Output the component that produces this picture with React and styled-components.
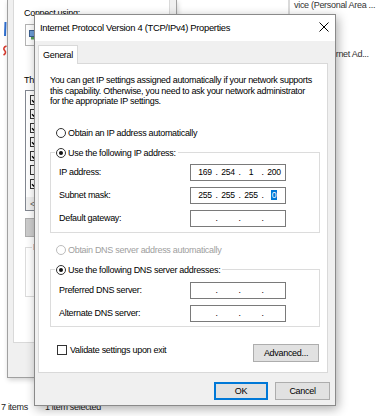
import React from "react";
import styled, { createGlobalStyle } from "styled-components";

const GlobalStyle = createGlobalStyle`
  html, body { margin: 0; padding: 0; background: #fff; overflow: hidden; }
  body { font-family: "Liberation Sans", Arial, sans-serif; }
  * { box-sizing: border-box; }
`;

const Desktop = styled.div`
  position: relative;
  width: 386px;
  height: 416px;
  overflow: hidden;
  background: #fff;
  font-family: "Liberation Sans", Arial, sans-serif;
  font-size: 9px;
  letter-spacing: -0.3px;
  color: #000;
`;

/* ---------- Explorer behind ---------- */
const Explorer = styled.div`
  position: absolute;
  inset: 0;
  display: grid;
  grid-template-rows: 1fr auto;
`;
const ExplorerMain = styled.div`
  display: flex;
`;
const NavPane = styled.div`
  width: 7px;
  flex: none;
  padding-top: 20px;
`;
const ContentPane = styled.div`
  flex: 1;
  display: flex;
  flex-direction: column;
  align-items: flex-start;
  color: #333;
`;
const Tile = styled.div`
  margin-left: ${(p) => p.$indent}px;
  margin-top: ${(p) => p.$top || 0}px;
  height: ${(p) => (p.$bar ? 14 : 10)}px;
  line-height: 10px;
  padding-left: ${(p) => (p.$bar ? 4 : 0)}px;
  border-left: ${(p) => (p.$bar ? "2px solid #dadada" : "none")};
  white-space: nowrap;
`;
const StatusBar = styled.div`
  display: flex;
  gap: 17px;
  height: 12px;
  line-height: 12px;
  margin-bottom: 3px;
  padding-left: 1px;
  color: #222;
`;

/* ---------- Ethernet properties window (behind) ---------- */
const EthWindow = styled.div`
  position: absolute;
  left: 7px;
  top: 0;
  width: 170px;
  height: 378px;
  background: #f0f0f0;
  border: 1px solid #a0a0a0;
  border-top: none;
  box-shadow: 1px 2px 5px rgba(0, 0, 0, 0.18);
  padding: 0 6px 34px 5px;
  display: flex;
  flex-direction: column;
`;
const EthPanel = styled.div`
  flex: 1;
  background: #fff;
  border: 1px solid #d9d9d9;
  border-top: none;
  padding: 8px 10px 0 10px;
  display: flex;
  flex-direction: column;
  align-items: flex-start;
`;
const EthLabel = styled.div`
  line-height: 11px;
  margin-top: ${(p) => p.$top || 0}px;
  white-space: nowrap;
`;
const AdapterBox = styled.div`
  margin: 5px 0 0 1px;
  width: 140px;
  height: 22px;
  border: 1px solid #b4b4b4;
  background: #fff;
  display: flex;
  align-items: center;
  padding-left: 3px;
`;
const ListBox = styled.div`
  margin: 4px 0 0 1px;
  width: 140px;
  height: 121px;
  border: 1px solid #828790;
  background: #fff;
  display: flex;
  flex-direction: column;
  padding: 4px 0 0 4px;
`;
const ListItem = styled.div`
  height: 14px;
  display: flex;
  align-items: flex-start;
  gap: 4px;
`;
const SmallCheck = styled.div`
  width: 10px;
  height: 10px;
  border: 1px solid #333;
  background: #fff;
  display: flex;
  align-items: center;
  justify-content: center;
`;
const HScroll = styled.div`
  margin: auto 0 0 -4px;
  height: 13px;
  background: #f0f0f0;
  display: flex;
  align-items: center;
  padding-left: 4px;
  color: #606060;
  font-size: 9px;
`;
const GrayButton = styled.div`
  margin: 7px 0 0 1px;
  width: 60px;
  height: 19px;
  background: #cccccc;
  border: 1px solid #adadad;
`;
const SmallGroup = styled.fieldset`
  margin: 4px 0 0 1px;
  padding: 0;
  width: 140px;
  height: 56px;
  border: 1px solid #dcdcdc;
  min-width: 0;
`;
const SmallLegend = styled.legend`
  margin-left: 6px;
  padding: 0 1px;
  line-height: 12px;
  color: #1a3d8f;
`;

/* ---------- TCP/IPv4 dialog ---------- */
const Dialog = styled.div`
  position: absolute;
  left: 34px;
  top: 14px;
  width: 302px;
  background: #f0f0f0;
  border: 1px solid #8a8a8a;
  box-shadow: 2px 3px 10px rgba(0, 0, 0, 0.32);
  display: flex;
  flex-direction: column;
`;
const TitleBar = styled.div`
  height: 26px;
  background: #fff;
  display: flex;
  align-items: center;
  justify-content: space-between;
  padding: 0 6px 2px 5px;
  font-size: 9.4px;
`;
const Body = styled.div`
  display: flex;
  flex-direction: column;
  padding: 4px 4px 5px 3px;
`;
const TabStrip = styled.div`
  display: flex;
`;
const Tab = styled.div`
  position: relative;
  z-index: 1;
  width: 40px;
  height: 19px;
  margin-bottom: -1px;
  background: #fff;
  border: 1px solid #d9d9d9;
  border-bottom: none;
  display: flex;
  align-items: center;
  justify-content: center;
  padding-bottom: 1px;
`;
const Panel = styled.div`
  width: 290px;
  background: #fff;
  border: 1px solid #d9d9d9;
  padding: 11px 7px 10px 11px;
  display: flex;
  flex-direction: column;
  align-items: flex-start;
`;
const Description = styled.p`
  margin: 0;
  line-height: 10.5px;
`;
const OptionRow = styled.div`
  display: inline-flex;
  align-items: center;
  gap: 2px;
  height: 12px;
  margin: ${(p) => p.$top || 0}px 0 0 ${(p) => (p.$legend ? 0 : 6)}px;
  color: ${(p) => (p.$disabled ? "#a0a0a0" : "#000")};
  white-space: nowrap;
`;
const Radio = styled.span`
  width: 10px;
  height: 10px;
  border-radius: 50%;
  border: 1px solid ${(p) => (p.$disabled ? "#bcbcbc" : "#333")};
  background: #fff;
  display: inline-flex;
  align-items: center;
  justify-content: center;
  flex: none;
  &::after {
    content: "";
    display: ${(p) => (p.$checked ? "block" : "none")};
    width: 4px;
    height: 4px;
    border-radius: 50%;
    background: #111;
  }
`;
const GroupBox = styled.fieldset`
  margin: 7px 0 0 0;
  padding: 0;
  width: 270px;
  min-width: 0;
  border: 1px solid #dcdcdc;
`;
const Legend = styled.legend`
  margin-left: 4px;
  padding: 0 2px 0 1px;
  line-height: 12px;
`;
const FieldGrid = styled.div`
  display: grid;
  grid-template-columns: 131px 96px;
  row-gap: 6px;
  align-items: center;
  padding: ${(p) => p.$pad};
`;
const FieldLabel = styled.span`
  white-space: nowrap;
`;
const IpBox = styled.div`
  width: 96px;
  height: 17px;
  border: 1px solid #7a7a7a;
  background: #fff;
  display: flex;
  align-items: center;
  padding-left: 4px;
  font-size: 8.6px;
`;
const Octet = styled.span`
  width: 20px;
  text-align: center;
  line-height: 10px;
`;
const Dot = styled.span`
  width: 3px;
  text-align: center;
  line-height: 10px;
`;
const Selected = styled.span`
  background: #0078d7;
  color: #fff;
  padding: 0 0.5px;
`;
const BottomRow = styled.div`
  align-self: stretch;
  margin-top: 17px;
  display: flex;
  justify-content: space-between;
  align-items: flex-start;
  padding: 0 1px 0 7px;
`;
const CheckRow = styled.label`
  display: flex;
  align-items: center;
  gap: 3px;
  height: 12px;
  white-space: nowrap;
`;
const CheckBox = styled.span`
  width: 10px;
  height: 10px;
  border: 1px solid #333;
  background: #fff;
  flex: none;
`;
const Button = styled.div`
  width: ${(p) => p.$w}px;
  height: 18px;
  background: #e1e1e1;
  border: ${(p) => (p.$default ? "2px solid #0078d7" : "1px solid #adadad")};
  display: flex;
  align-items: center;
  justify-content: center;
`;
const ButtonRow = styled.div`
  margin-top: 9px;
  display: flex;
  justify-content: flex-end;
  gap: 7px;
  padding-right: 1px;
`;

const CheckMark = () => (
  <svg width="8" height="8" viewBox="0 0 8 8">
    <path d="M1 4.2 L3 6.2 L7 1.8" fill="none" stroke="#000" strokeWidth="1.3" />
  </svg>
);

const IpField = ({ values, selectLast }) => (
  <IpBox>
    {values.map((v, i) => (
      <React.Fragment key={i}>
        <Octet>{selectLast && i === 3 ? <Selected>{v}</Selected> : v}</Octet>
        {i < 3 && <Dot>.</Dot>}
      </React.Fragment>
    ))}
  </IpBox>
);

const empty = ["", "", "", ""];
const ethItems = [true, true, true, true, true, false, true];

export default function App() {
  return (
    <Desktop>
      <GlobalStyle />
      <Explorer>
        <ExplorerMain>
          <NavPane>
            <svg width="7" height="38" viewBox="0 0 7 38">
              <path d="M4.5 2 L6.5 2 L6 16 L4 16 Z" fill="#2f6fd0" />
              <path d="M6.5 26 C3.5 27 3 29 5 31 C6 32 5.5 34 3.5 35" fill="none" stroke="#d83a2e" strokeWidth="1.6" />
            </svg>
          </NavPane>
          <ContentPane>
            <Tile $indent={281} $bar>vice (Personal Area ...</Tile>
            <Tile $indent={324} $top={35}>ernet Ad...</Tile>
          </ContentPane>
        </ExplorerMain>
        <StatusBar>
          <span>7 items</span>
          <span>1 item selected</span>
        </StatusBar>
      </Explorer>

      <EthWindow>
        <EthPanel>
          <EthLabel>Connect using:</EthLabel>
          <AdapterBox>
            <svg width="8" height="10" viewBox="0 0 8 10">
              <rect x="0.5" y="0.5" width="7" height="6" fill="#6f9fd8" stroke="#3b5f8f" />
              <rect x="2" y="7" width="4" height="2.5" fill="#5aa35a" />
            </svg>
          </AdapterBox>
          <EthLabel $top={29}>This connection uses the following items:</EthLabel>
          <ListBox>
            {ethItems.map((c, i) => (
              <ListItem key={i}>
                <SmallCheck>{c && <CheckMark />}</SmallCheck>
              </ListItem>
            ))}
            <HScroll>&lt;</HScroll>
          </ListBox>
          <GrayButton />
          <SmallGroup>
            <SmallLegend>Description</SmallLegend>
          </SmallGroup>
        </EthPanel>
      </EthWindow>

      <Dialog>
        <TitleBar>
          <span>Internet Protocol Version 4 (TCP/IPv4) Properties</span>
          <svg width="10" height="10" viewBox="0 0 10 10">
            <path d="M0.5 0.5 L9.5 9.5 M9.5 0.5 L0.5 9.5" stroke="#000" strokeWidth="1" />
          </svg>
        </TitleBar>
        <Body>
          <TabStrip>
            <Tab>General</Tab>
          </TabStrip>
          <Panel>
            <Description>
              You can get IP settings assigned automatically if your network supports
              <br />
              this capability. Otherwise, you need to ask your network administrator
              <br />
              for the appropriate IP settings.
            </Description>
            <OptionRow $top={20}>
              <Radio />
              Obtain an IP address automatically
            </OptionRow>
            <GroupBox>
              <Legend>
                <OptionRow $legend>
                  <Radio $checked />
                  Use the following IP address:
                </OptionRow>
              </Legend>
              <FieldGrid $pad="5px 0 5px 8px">
                <FieldLabel>IP address:</FieldLabel>
                <IpField values={["169", "254", "1", "200"]} />
                <FieldLabel>Subnet mask:</FieldLabel>
                <IpField values={["255", "255", "255", "0"]} selectLast />
                <FieldLabel>Default gateway:</FieldLabel>
                <IpField values={empty} />
              </FieldGrid>
            </GroupBox>
            <OptionRow $top={11} $disabled>
              <Radio $disabled />
              Obtain DNS server address automatically
            </OptionRow>
            <GroupBox>
              <Legend>
                <OptionRow $legend>
                  <Radio $checked />
                  Use the following DNS server addresses:
                </OptionRow>
              </Legend>
              <FieldGrid $pad="6px 0 4px 8px">
                <FieldLabel>Preferred DNS server:</FieldLabel>
                <IpField values={empty} />
                <FieldLabel>Alternate DNS server:</FieldLabel>
                <IpField values={empty} />
              </FieldGrid>
            </GroupBox>
            <BottomRow>
              <CheckRow>
                <CheckBox />
                Validate settings upon exit
              </CheckRow>
              <Button $w={66}>Advanced...</Button>
            </BottomRow>
          </Panel>
          <ButtonRow>
            <Button $w={54} $default>OK</Button>
            <Button $w={55}>Cancel</Button>
          </ButtonRow>
        </Body>
      </Dialog>
    </Desktop>
  );
}
